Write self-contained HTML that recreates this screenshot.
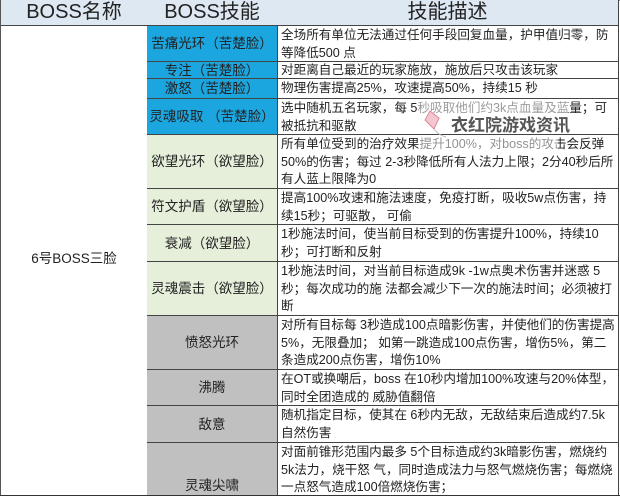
<!DOCTYPE html>
<html><head><meta charset="utf-8"><style>
*{margin:0;padding:0;box-sizing:border-box}
body{width:620px;height:500px;background:#fff;position:relative;overflow:hidden;font-family:"Liberation Sans","Noto Sans CJK SC",sans-serif;color:#222}
.c{position:absolute;border-right:1px solid #444;border-bottom:1px solid #444;display:flex;align-items:center;justify-content:center;font-size:13.5px;line-height:17px;text-align:center}
.d{position:absolute;border-right:1px solid #444;border-bottom:1px solid #444;font-size:12.6px;line-height:17.5px;padding:1px 0 0 4px;white-space:nowrap}
.h{background:#dde8f2;font-size:20px;color:#222}
.b{background:#1ca6df}
.g{background:#e6efda}
.y{background:#c0c0c0}
</style></head><body>
<div style="position:absolute;left:0;top:0;width:620px;height:1px;background:#888"></div>
<div style="position:absolute;left:0;top:0;width:1px;height:496px;background:#555"></div>
<div class="c h" style="left:1px;top:0;width:147px;height:26px">BOSS名称</div>
<div class="c h" style="left:147px;top:0;width:131px;height:26px">BOSS技能</div>
<div class="c h" style="left:277px;top:0;width:342px;height:26px">技能描述</div>
<div class="c" style="left:1px;top:26px;width:147px;height:470px;padding-bottom:5px">6号BOSS三脸</div>

<div class="c b" style="left:147px;top:26px;width:131px;height:36px">苦痛光环（苦楚脸）</div>
<div class="d" style="left:277px;top:26px;width:342px;height:36px">全场所有单位无法通过任何手段回复血量，护甲值归零，防<br>等降低500 点</div>
<div class="c b" style="left:147px;top:62px;width:131px;height:17px">专注（苦楚脸）</div>
<div class="d" style="left:277px;top:62px;width:342px;height:17px;padding-top:0;line-height:16px">对距离自己最近的玩家施放，施放后只攻击该玩家</div>
<div class="c b" style="left:147px;top:79px;width:131px;height:20px">激怒（苦楚脸）</div>
<div class="d" style="left:277px;top:79px;width:342px;height:20px">物理伤害提高25%，攻速提高50%，持续15 秒</div>
<div class="c b" style="left:147px;top:99px;width:131px;height:36px">灵魂吸取 （苦楚脸）</div>
<div class="d" style="left:277px;top:99px;width:342px;height:36px">选中随机五名玩家，每 5秒吸取他们约3k点血量及蓝量；可<br>被抵抗和驱散</div>

<div class="c g" style="left:147px;top:135px;width:131px;height:54px">欲望光环（欲望脸）</div>
<div class="d" style="left:277px;top:135px;width:342px;height:54px">所有单位受到的治疗效果提升100%，对boss的攻击会反弹<br>50%的伤害；每过 2-3秒降低所有人法力上限；2分40秒后所<br>有人蓝上限降为0</div>
<div class="c g" style="left:147px;top:189px;width:131px;height:36px">符文护盾（欲望脸）</div>
<div class="d" style="left:277px;top:189px;width:342px;height:36px">提高100%攻速和施法速度，免疫打断，吸收5w点伤害，持<br>续15秒；可驱散， 可偷</div>
<div class="c g" style="left:147px;top:225px;width:131px;height:37px">衰减（欲望脸）</div>
<div class="d" style="left:277px;top:225px;width:342px;height:37px">1秒施法时间，使当前目标受到的伤害提升100%，持续10<br>秒；可打断和反射</div>
<div class="c g" style="left:147px;top:262px;width:131px;height:54px">灵魂震击（欲望脸）</div>
<div class="d" style="left:277px;top:262px;width:342px;height:54px">1秒施法时间，对当前目标造成9k -1w点奥术伤害并迷惑 5<br>秒；每次成功的施 法都会减少下一次的施法时间；必须被打<br>断</div>

<div class="c y" style="left:147px;top:316px;width:131px;height:54px">愤怒光环</div>
<div class="d" style="left:277px;top:316px;width:342px;height:54px">对所有目标每 3秒造成100点暗影伤害，并使他们的伤害提高<br>5%，无限叠加； 如第一跳造成100点伤害，增伤5%，第二<br>条造成200点伤害，增伤10%</div>
<div class="c y" style="left:147px;top:370px;width:131px;height:36px">沸腾</div>
<div class="d" style="left:277px;top:370px;width:342px;height:36px">在OT或换嘲后，boss 在10秒内增加100%攻速与20%体型，<br>同时全团造成的 威胁值翻倍</div>
<div class="c y" style="left:147px;top:406px;width:131px;height:37px">敌意</div>
<div class="d" style="left:277px;top:406px;width:342px;height:37px">随机指定目标，使其在 6秒内无敌，无敌结束后造成约7.5k<br>自然伤害</div>
<div class="c y" style="left:147px;top:443px;width:131px;height:53px;align-items:flex-end;padding-bottom:1px">灵魂尖啸</div>
<div class="d" style="left:277px;top:443px;width:342px;height:53px">对面前锥形范围内最多 5个目标造成约3k暗影伤害，燃烧约<br>5k法力，烧干怒 气，同时造成法力与怒气燃烧伤害；每燃烧<br>一点怒气造成100倍燃烧伤害；</div>
<div style="position:absolute;left:0;top:495px;width:620px;height:1px;background:#333"></div>

<div style="position:absolute;left:418px;top:100px;width:150px;height:34px;background:rgba(255,255,255,0.55)"></div>
<div style="position:absolute;left:418px;top:136px;width:140px;height:16px;background:rgba(255,255,255,0.5)"></div>
<svg style="position:absolute;left:422px;top:109px" width="30" height="30" viewBox="0 0 30 30"><path d="M8 2 L17 9 L12 20 L3 11 Z" fill="#f4c7cf" stroke="#d98a98" stroke-width="1"/><path d="M12 20 Q16 26 24 28" fill="none" stroke="#bbb" stroke-width="1"/></svg>
<div style="position:absolute;left:451px;top:111px;font-size:17px;font-weight:bold;color:#555;white-space:nowrap">衣红院游戏资讯</div>
</body></html>
